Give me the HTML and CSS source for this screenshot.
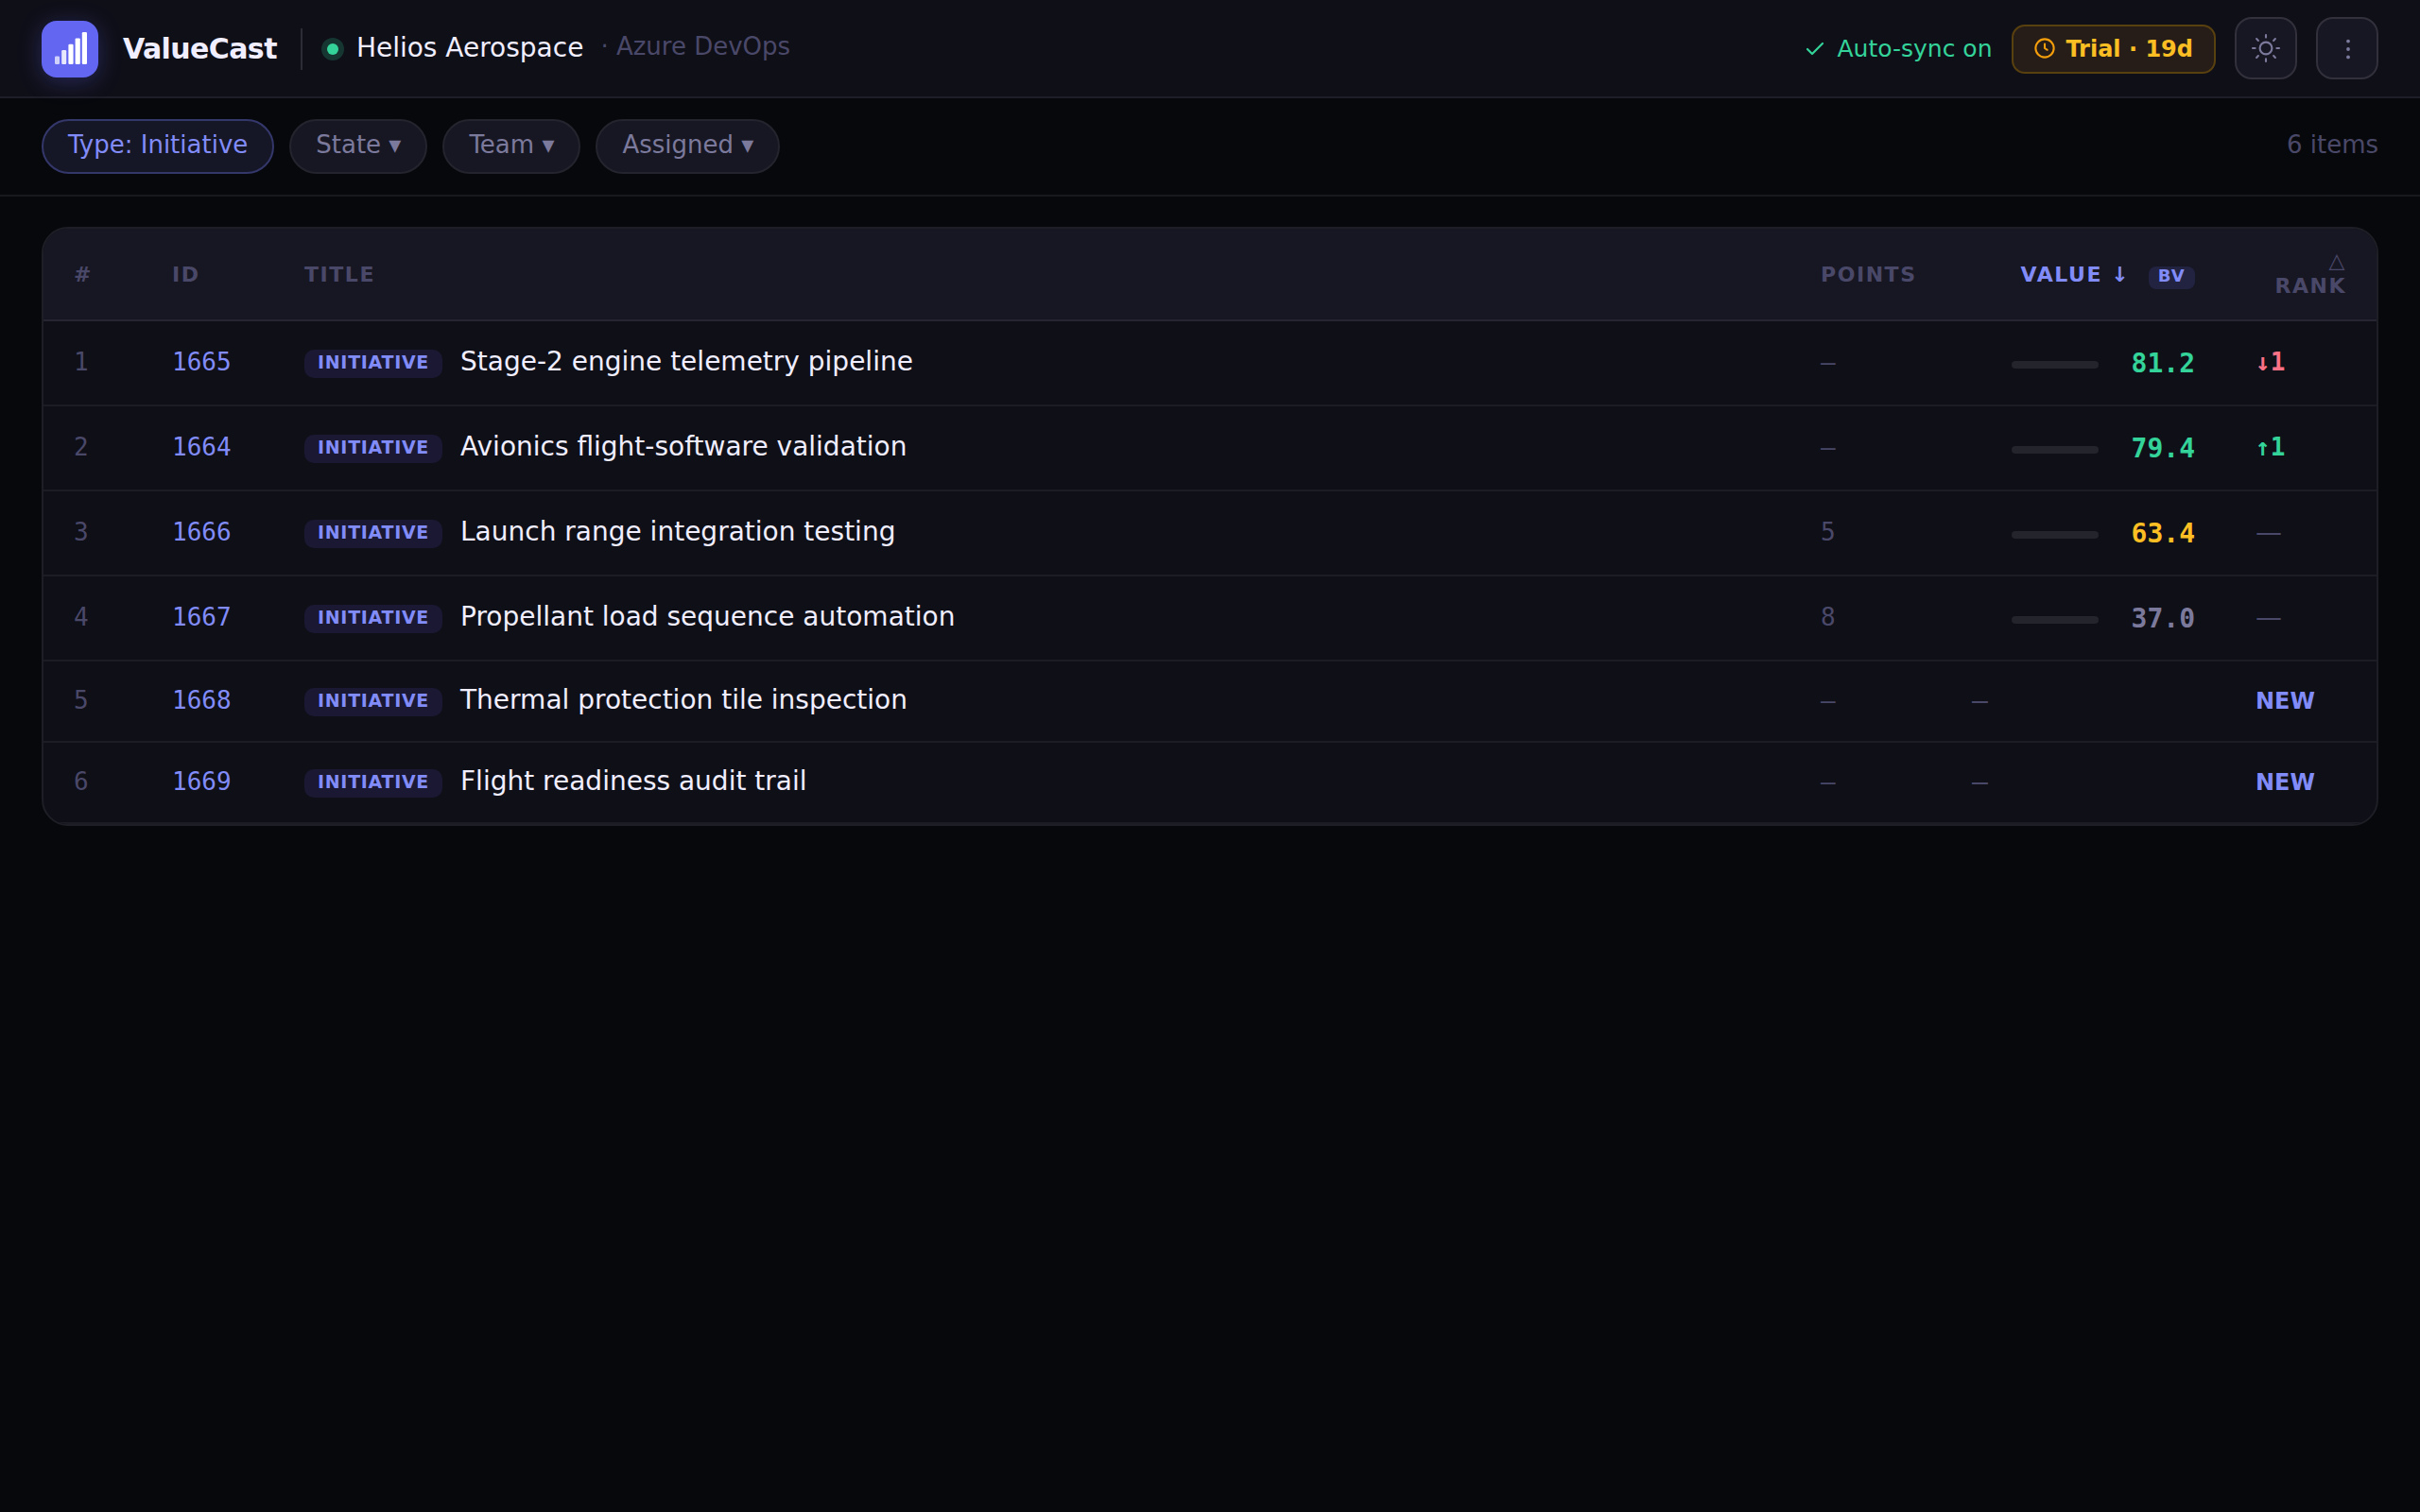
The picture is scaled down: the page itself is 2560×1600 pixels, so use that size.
FILE: index.html
```html
<!DOCTYPE html>
<html lang="en">
<head>
<meta charset="utf-8">
<title>ValueCast</title>
<link rel="stylesheet" href="styles.css">
</head>
<body>
<header class="topbar">
  <div class="brand">
    <span class="logo">
      <svg width="60" height="60" viewBox="0 0 60 60" fill="#fff">
        <rect x="14" y="37.4" width="5" height="8.6" rx="1.2" opacity=".7"/>
        <rect x="21.2" y="31" width="5" height="15" rx="1.2" opacity=".85"/>
        <rect x="28.4" y="24.7" width="5.2" height="21.3" rx="1.2"/>
        <rect x="35.6" y="18.4" width="5.2" height="27.6" rx="1.2"/>
        <rect x="42.8" y="12" width="5.2" height="34" rx="1.2"/>
      </svg>
    </span>
    <span class="name">ValueCast</span>
    <span class="divider"></span>
    <span class="status"></span>
    <span class="org">Helios Aerospace</span>
    <span class="source">· Azure DevOps</span>
  </div>
  <div class="actions">
    <span class="sync">
      <svg width="24" height="24" viewBox="0 0 24 24" fill="none" stroke="currentColor" stroke-width="2.2" stroke-linecap="round" stroke-linejoin="round"><path d="M20 6 9 17l-5-5"/></svg>
      <span class="sync-text">Auto-sync on</span>
    </span>
    <span class="trial">
      <svg width="22" height="22" viewBox="0 0 16 16" fill="none" stroke="#f59e0b" stroke-width="1.5" stroke-linecap="round" stroke-linejoin="round"><circle cx="8" cy="8" r="7"/><path d="M8 4.8V8l2 1.3"/></svg>
      <span class="trial-text">Trial · 19d</span>
    </span>
    <button class="icon-btn" aria-label="Theme">
      <svg width="32" height="32" viewBox="-16 -16 32 32" fill="none" stroke="currentColor" stroke-width="2.1" stroke-linecap="round"><circle r="6.4"/><path d="M0-14v2.6M0 11.4V14M-14 0h2.6M11.4 0H14M-9.9-9.9l1.8 1.8M8.1 8.1l1.8 1.8M-9.9 9.9l1.8-1.8M8.1-8.1l1.8-1.8"/></svg>
    </button>
    <button class="icon-btn" aria-label="More">
      <svg width="32" height="32" viewBox="-16 -16 32 32" fill="currentColor"><circle cx="1" cy="-7.4" r="1.9"/><circle cx="1" cy="1" r="1.9"/><circle cx="1" cy="9.4" r="1.9"/></svg>
    </button>
  </div>
</header>
<nav class="filters">
  <button class="chip chip-active">Type: Initiative</button>
  <button class="chip">State ▾</button>
  <button class="chip">Team ▾</button>
  <button class="chip">Assigned ▾</button>
  <span class="count">6 items</span>
</nav>
<main class="card">
  <table class="items">
    <colgroup><col class="c-num"><col class="c-id"><col><col class="c-points"><col class="c-value"><col class="c-rank"></colgroup>
    <thead>
      <tr><th>#</th><th>ID</th><th>Title</th><th>Points</th><th class="sorted">Value ↓ <span class="bv">BV</span></th><th class="rank-head">△ Rank</th></tr>
    </thead>
    <tbody>
      <tr><td class="num">1</td><td class="id">1665</td><td><div class="title"><span class="tag">INITIATIVE</span><span>Stage-2 engine telemetry pipeline</span></div></td><td class="points">–</td><td><div class="value high"><span class="bar"></span><span class="score">81.2</span></div></td><td class="rank down">↓1</td></tr>
      <tr><td class="num">2</td><td class="id">1664</td><td><div class="title"><span class="tag">INITIATIVE</span><span>Avionics flight-software validation</span></div></td><td class="points">–</td><td><div class="value high"><span class="bar"></span><span class="score">79.4</span></div></td><td class="rank up">↑1</td></tr>
      <tr><td class="num">3</td><td class="id">1666</td><td><div class="title"><span class="tag">INITIATIVE</span><span>Launch range integration testing</span></div></td><td class="points">5</td><td><div class="value mid"><span class="bar"></span><span class="score">63.4</span></div></td><td class="rank same">—</td></tr>
      <tr><td class="num">4</td><td class="id">1667</td><td><div class="title"><span class="tag">INITIATIVE</span><span>Propellant load sequence automation</span></div></td><td class="points">8</td><td><div class="value low"><span class="bar"></span><span class="score">37.0</span></div></td><td class="rank same">—</td></tr>
      <tr class="unscored"><td class="num">5</td><td class="id">1668</td><td><div class="title"><span class="tag">INITIATIVE</span><span>Thermal protection tile inspection</span></div></td><td class="points">–</td><td class="none">–</td><td class="rank new">NEW</td></tr>
      <tr class="unscored"><td class="num">6</td><td class="id">1669</td><td><div class="title"><span class="tag">INITIATIVE</span><span>Flight readiness audit trail</span></div></td><td class="points">–</td><td class="none">–</td><td class="rank new">NEW</td></tr>
    </tbody>
  </table>
</main>
</body>
</html>
```
FILE: styles.css
```css
* { box-sizing: border-box; }

body {
  margin: 0;
  min-height: 1600px;
  background: #07080c;
  color: #f0eeff;
  font-family: "DejaVu Sans", sans-serif;
  font-size: 28px;
}

button { font-family: inherit; }
svg { display: block; flex: none; }

.topbar {
  display: flex;
  justify-content: space-between;
  align-items: center;
  height: 104px;
  padding: 0 44px;
  background: #0f0f18;
  border-bottom: 2px solid #1e1e28;
}

.brand { display: flex; align-items: center; padding-top: 2px; }
.logo {
  width: 60px;
  height: 60px;
  border-radius: 16px;
  background: #6366f1;
  box-shadow: 0 4px 24px rgba(99, 102, 241, .3);
}
.name { margin: 0 0 1px 26px; font-size: 30px; font-weight: 700; letter-spacing: -.6px; }
.divider { width: 2px; height: 44px; margin-left: 25px; background: #2c2c36; }
.status {
  width: 12px;
  height: 12px;
  margin-left: 26px;
  border-radius: 50%;
  background: #34d399;
  box-shadow: 0 0 0 6px rgba(52, 211, 153, .2);
}
.org { margin: 0 0 3px 19px; }
.source { margin: 0 0 6px 18px; font-size: 26px; color: #4a4868; }

.actions { display: flex; align-items: center; gap: 20px; }
.sync { display: flex; align-items: center; gap: 12px; padding-top: 2px; font-size: 25px; color: #34d399; }
.sync-text { margin-left: -.5px; padding: 0 .5px 2px 0; }
.trial {
  display: flex;
  align-items: center;
  gap: 11.4px;
  height: 52px;
  margin-top: 2px;
  padding: 0 22px;
  border: 2px solid #59400f;
  border-radius: 14px;
  background: #271d18;
  color: #fbbf24;
  font-size: 24px;
  font-weight: 700;
}
.trial svg { margin-bottom: 2px; }
.icon-btn {
  display: flex;
  align-items: center;
  justify-content: center;
  width: 66px;
  height: 66px;
  padding: 0;
  border: 2px solid #31303b;
  border-radius: 18px;
  background: #171723;
  color: #7c7a9c;
}

.filters {
  display: flex;
  align-items: center;
  gap: 16px;
  height: 104px;
  padding: 0 44px;
  border-bottom: 2px solid #18191e;
}
.chip {
  height: 58px;
  padding: 0 26px 4px;
  border: 2px solid #24242e;
  border-radius: 29px;
  background: #171723;
  color: #7c7a9c;
  font-size: 26px;
}
.chip-active { border-color: #34376a; background: #151626; color: #818cf8; }
.count { margin-left: auto; padding-bottom: 4px; font-size: 26px; color: #4a4868; }

.card {
  margin: 32px 44px 0;
  border: 2px solid #1e1e26;
  border-radius: 28px;
  background: #0f0f18;
  overflow: hidden;
}
.items { width: 100%; border-collapse: separate; border-spacing: 0; table-layout: fixed; }
.c-num { width: 104px; }
.c-id { width: 140px; }
.c-points { width: 160px; }
.c-value { width: 300px; }
.c-rank { width: 160px; }

th {
  height: 98px;
  padding: 0 32px;
  border-bottom: 2px solid #252430;
  background: #171723;
  color: #4a4868;
  font-size: 22px;
  font-weight: 700;
  letter-spacing: 1.54px;
  line-height: 25px;
  text-align: left;
  text-transform: uppercase;
}
.sorted { padding-top: 3px; text-align: right; color: #818cf8; white-space: nowrap; }
.rank-head { padding-bottom: 2px; line-height: 27px; text-align: right; }
.bv {
  display: inline-block;
  margin-left: 10.3px;
  padding: 0 10px 4px;
  border-radius: 8px;
  background: #212341;
  font-size: 18px;
  letter-spacing: 1.2px;
  line-height: 20px;
}

td {
  height: 90px;
  padding: 0 32px;
  border-bottom: 2px solid #1c1c25;
  white-space: nowrap;
}
.unscored td { height: 86px; }
.num, .id, .points { padding-bottom: 2px; font: 26px "DejaVu Sans Mono", monospace; }
.num, .points { color: #4a4868; }
.id { color: #818cf8; }
.title { display: flex; align-items: flex-start; gap: 19px; height: 36px; }
.tag {
  height: 30px;
  margin-top: 4px;
  padding: 0 14px;
  border-radius: 10px;
  background: #1a1832;
  color: #818cf8;
  font-size: 19px;
  font-weight: 700;
  letter-spacing: .7px;
  line-height: 27px;
}
.value { display: flex; align-items: center; justify-content: flex-end; gap: 34.6px; padding-top: 1px; }
.bar { width: 92px; height: 8px; margin-top: 3px; border-radius: 4px; background: #24242d; }
.score, .none { font-family: "DejaVu Sans Mono", monospace; }
.score { font-weight: 700; }
.none { padding-bottom: 2px; color: #4a4868; }
.high, .up { color: #34d399; }
.mid { color: #fbbf24; }
.low { color: #7c7a9c; }
.rank { font-size: 26px; }
.up, .down { padding-bottom: 2px; font-family: "DejaVu Sans Mono", monospace; font-weight: 700; }
.down { color: #fb7185; }
.same { padding-bottom: 2px; color: #4a4868; font-size: 28px; }
.new { color: #818cf8; font-size: 24px; font-weight: 700; }
```
